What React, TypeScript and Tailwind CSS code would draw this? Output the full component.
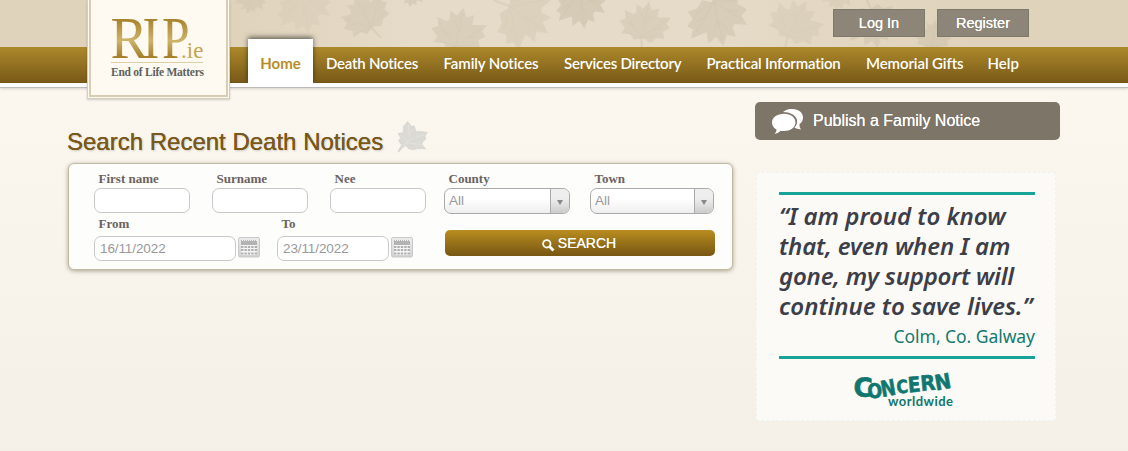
const LEAF =
  "M50 2 L58 18 L72 11 L71 29 L80 27 L97 24 L91 37 L99 44 L88 53 L93 66 L78 68 L68 79 L54 73 L52 74 L58 98 L55 99 L48 75 L36 80 L28 71 L10 73 L15 62 L2 50 L13 43 L7 27 L25 32 L30 28 L28 12 L41 18 Z";
const VEINS =
  "M50 74 L50 12 M50 72 L88 32 M50 72 L12 36 M50 73 L84 60 M50 73 L18 68 M50 45 L60 28 M50 45 L40 28 M68 53 L84 48 M32 55 L18 50";

type LeafProps = { x: number; y: number; size: number; turn: number; tone?: number };

const leaves: LeafProps[] = [
  { x: 251, y: -1, size: 32, turn: 195, tone: 0.75 },
  { x: 304, y: 7, size: 56, turn: 170, tone: 0.4 },
  { x: 366, y: 17, size: 52, turn: -28, tone: 0.7 },
  { x: 412, y: -6, size: 28, turn: 190, tone: 0.8 },
  { x: 458, y: 34, size: 56, turn: 12, tone: 0.7 },
  { x: 522, y: 15, size: 66, turn: 125, tone: 0.55 },
  { x: 581, y: 4, size: 52, turn: 172, tone: 0.9 },
  { x: 644, y: 26, size: 52, turn: 12, tone: 0.7 },
  { x: 717, y: 16, size: 64, turn: 168, tone: 0.8 },
  { x: 794, y: 25, size: 56, turn: 28, tone: 0.5 },
  { x: 838, y: -4, size: 32, turn: 190, tone: 0.5 },
  { x: 873, y: 22, size: 56, turn: 170, tone: 0.8 },
  { x: 933, y: 38, size: 38, turn: 8, tone: 0.9 },
];

function HeaderLeaves() {
  return (
    <svg className="absolute inset-0" width="1128" height="47" viewBox="0 0 1128 47" aria-hidden="true">
      <defs>
        <linearGradient id="paper" x1="0" x2="1">
          <stop offset="0" stopColor="#e5dbc8" stopOpacity="0" />
          <stop offset=".25" stopColor="#e5dbc8" />
          <stop offset=".65" stopColor="#e5dbc8" />
          <stop offset="1" stopColor="#e5dbc8" stopOpacity="0" />
        </linearGradient>
      </defs>
      <rect x="230" width="740" height="47" fill="url(#paper)" />
      {leaves.map((l) => (
        <g
          key={l.x}
          opacity={l.tone ?? 1}
          transform={`translate(${l.x} ${l.y}) rotate(${l.turn}) scale(${l.size / 100}) translate(-50 -50)`}
        >
          <path d={LEAF} fill="#d5cab5" />
          <path d={VEINS} fill="none" stroke="#cfc4ae" strokeWidth="1.3" />
        </g>
      ))}
    </svg>
  );
}

function Logo() {
  return (
    <div className="absolute left-[87px] top-0 z-10 h-[99px] w-[143px] border border-t-0 border-[#d3cdbf] bg-[#fefaf1] px-px pb-px shadow-[0_1px_2px_rgba(0,0,0,0.18)]">
      <div className="h-full border-2 border-t-0 border-[#d8ccb3] bg-[#fefaf1]">
        <svg width="135" height="95" viewBox="91 0 135 95">
          <defs>
            <linearGradient id="gold" x1="0" y1="-40" x2="0" y2="1" gradientUnits="userSpaceOnUse">
              <stop offset="0.05" stopColor="#a9842f" />
              <stop offset="0.55" stopColor="#cdb36a" />
              <stop offset="0.95" stopColor="#a57f2a" />
            </linearGradient>
          </defs>
          <g fill="url(#gold)" fontFamily="'Liberation Serif', serif" fontSize="59">
            <text transform="translate(110.500 58) scale(0.95 1)">R</text>
            <text transform="translate(142.500 58) scale(0.85 1)">I</text>
            <text transform="translate(162 58) scale(0.84 1)">P</text>
          </g>
          <text x="181" y="58" fontSize="23" fill="#c3a556" fontFamily="'Liberation Serif', serif" textLength="22.500">.ie</text>
          <path d="M111 62.500H203" stroke="#dccfa6" />
          <text x="111" y="76" fontSize="11.500" fontWeight="700" fill="#5d625f" fontFamily="'Liberation Serif', serif" textLength="93">
            End of Life Matters
          </text>
        </svg>
      </div>
    </div>
  );
}

const nav = [
  { label: "Death Notices", cls: "w-[93px] tracking-[-0.22px]" },
  { label: "Family Notices", cls: "w-[96px] tracking-[-0.1px]" },
  { label: "Services Directory", cls: "w-[118px] tracking-[-0.22px]" },
  { label: "Practical Information", cls: "w-[135px] tracking-[-0.2px]" },
  { label: "Memorial Gifts", cls: "w-[97px] tracking-[-0.1px]" },
  { label: "Help", cls: "w-[32px]" },
];

function Header() {
  return (
    <header className="relative">
      <div className="relative h-[47px] overflow-hidden bg-[#e0d3bc]">
        <HeaderLeaves />
        <div className="relative flex justify-end gap-3 pr-[99px] pt-[9px] font-['Liberation_Sans',sans-serif] text-[14.5px] text-white">
          <a className="flex h-7 w-[92px] items-center justify-center border border-[#7f796b] bg-[#8d8678] pt-0.5 [text-shadow:0_0_0.5px_white]">Log In</a>
          <a className="flex h-7 w-[92px] items-center justify-center border border-[#7f796b] bg-[#8d8678] pt-0.5 [text-shadow:0_0_0.5px_white]">Register</a>
        </div>
      </div>
      <nav className="flex h-9 bg-linear-to-b from-[#ac892b] to-[#785917] pl-[248px] font-[Lato,sans-serif] text-[15px] font-semibold text-white">
        <a className="relative -mt-2 flex h-11 w-[65px] items-center justify-center bg-white pt-[4px] font-bold text-[#b98d25] shadow-[0_-2px_5px_rgba(0,0,0,0.55)] [clip-path:inset(-8px_-8px_0_-8px)]">
          Home
        </a>
        <div className="flex gap-[24.500px] pl-[13px] leading-8">
          {nav.map((n) => (
            <a key={n.label} className={`whitespace-nowrap ${n.cls}`}>{n.label}</a>
          ))}
        </div>
      </nav>
      <div className="h-[5px] border-b border-[#bdbbb9] bg-white shadow-[0_1px_3px_rgba(0,0,0,0.15)]" />
      <Logo />
    </header>
  );
}

function Label({ children }: { children: string }) {
  return <span className="pl-[4.500px] text-[13px] leading-[15px]">{children}</span>;
}

function TextField({ label }: { label: string }) {
  return (
    <label className="flex w-24 flex-col gap-0.5">
      <Label>{label}</Label>
      <input className="h-[25px] w-full rounded-[7px] border border-[#c9c9c9] bg-white" />
    </label>
  );
}

function SelectField({ label, cls }: { label: string; cls: string }) {
  return (
    <label className={`flex flex-col gap-0.5 ${cls}`}>
      <Label>{label}</Label>
      <span className="flex h-[26px] overflow-hidden rounded-[7px] border border-[#aaa] bg-linear-to-t from-[#eee] to-white to-60%">
        <span className="flex-1 pl-1 font-['Liberation_Sans',sans-serif] text-[13.5px] font-normal leading-[23px] text-[#999]">All</span>
        <span className="flex w-[19px] items-center justify-center border-l border-[#aaa] bg-linear-to-t from-[#ccc] to-[#eee] to-60%">
          <svg className="mt-0.5" width="6" height="5" viewBox="0 0 6 5"><path d="M0 0H6L3 5Z" fill="#888" /></svg>
        </span>
      </span>
    </label>
  );
}

function CalendarButton() {
  return (
    <svg className="-mt-[3px]" width="22" height="21" viewBox="0 0 22 21">
      <defs>
        <linearGradient id="cal" x1="0" y1="0" x2="0" y2="1">
          <stop offset="0" stopColor="#ececec" />
          <stop offset="1" stopColor="#d2d2d2" />
        </linearGradient>
      </defs>
      <rect x=".5" y=".5" width="21" height="19.500" rx="1.500" fill="url(#cal)" stroke="#c9c9c9" />
      <rect x="3" y="3" width="16" height="15" fill="#f5f5f5" />
      <path d="M3 4H19V8H3Z" fill="#b3b3b3" />
      <path d="M3 3.500H19" stroke="#b3b3b3" strokeDasharray="1 1" />
      <path d="M3 10H19M3 13H19M3 16.500H19" stroke="#b0b0b0" strokeWidth="2" strokeDasharray="2.400 1" />
    </svg>
  );
}

function DateField({ label, value, cls }: { label: string; value: string; cls: string }) {
  return (
    <label className="flex flex-col gap-[5px]">
      <Label>{label}</Label>
      <span className="flex items-center gap-0.5">
        <input
          className={`h-[25px] rounded-[7px] border border-[#c9c9c9] bg-white px-[5px] font-['Liberation_Sans',sans-serif] text-[13.5px] font-normal tracking-[-0.1px] text-[#999] ${cls}`}
          defaultValue={value}
        />
        <CalendarButton />
      </span>
    </label>
  );
}

function SearchPanel() {
  return (
    <form className="flex h-[107px] w-[665px] gap-[18px] rounded-md border border-[#c2bba2] bg-[#fdfdfb] pl-[25px] pt-[7px] font-['Liberation_Serif',serif] font-bold text-[#6b6360] shadow-[0_1px_4px_rgba(90,80,50,0.5)]">
      <div className="flex flex-col gap-[3px]">
        <div className="flex gap-[22px]">
          <TextField label="First name" />
          <TextField label="Surname" />
          <TextField label="Nee" />
        </div>
        <div className="flex gap-[17px]">
          <DateField label="From" value="16/11/2022" cls="w-[142px]" />
          <DateField label="To" value="23/11/2022" cls="w-28" />
        </div>
      </div>
      <div className="flex flex-col gap-4">
        <div className="flex gap-5">
          <SelectField label="County" cls="w-[126px]" />
          <SelectField label="Town" cls="w-[124px]" />
        </div>
        <button
          type="button"
          className="ml-px flex h-[26px] w-[270px] items-center justify-center gap-[3px] rounded-[5px] bg-linear-to-b from-[#b98d1f] to-[#775713] pr-0.5 pt-px font-['Liberation_Sans',sans-serif] text-[14px] font-normal text-white [text-shadow:0_0_0.5px_white]"
        >
          <svg className="mt-1" width="13" height="13" viewBox="0 0 13 13" fill="none" stroke="white">
            <circle cx="4.800" cy="4.800" r="3.700" strokeWidth="1.800" />
            <path d="M7.500 7.500L11.500 11.500" strokeWidth="2.800" />
          </svg>
          SEARCH
        </button>
      </div>
    </form>
  );
}

const quote = [
  { text: "“I am proud to know", cls: "tracking-[0px]" },
  { text: "that, even when I am", cls: "tracking-[-0.1px]" },
  { text: "gone, my support will", cls: "tracking-[-0.2px]" },
  { text: "continue to save lives.”", cls: "tracking-[-0.02px]" },
];

const concern = [
  { ch: "C", x: 1, y: 25, size: 26, turn: 3, sx: 1 },
  { ch: "O", x: 16, y: 27.5, size: 20, turn: -5, sx: 0.87 },
  { ch: "N", x: 30, y: 26, size: 22, turn: -10, sx: 0.82 },
  { ch: "C", x: 45, y: 22.5, size: 18, turn: -5, sx: 0.88 },
  { ch: "E", x: 56.5, y: 21.5, size: 21, turn: -5, sx: 0.88 },
  { ch: "R", x: 69, y: 20, size: 21, turn: -5, sx: 0.93 },
  { ch: "N", x: 84, y: 19.5, size: 21, turn: -10, sx: 0.93 },
];

function Banner() {
  return (
    <section className="ml-px mt-8 flex h-[249px] w-[300px] flex-col border border-dashed border-[#eef3ef] bg-[#fcfaf6] pl-[22px] pr-5 pt-[19px]">
      <div className="h-[3px] bg-[#16a398]" />
      <div className="mt-[6px] font-['Noto_Sans',sans-serif] text-[24px] font-semibold italic leading-[30px] text-[#3c3e49]">
        {quote.map((q) => (
          <div key={q.text}>
            <span className={`whitespace-nowrap ${q.cls}`}>{q.text}</span>
          </div>
        ))}
      </div>
      <div className="text-right font-['Noto_Sans',sans-serif] text-[17.500px] leading-[30px] text-[#127a70]">
        <span className="whitespace-nowrap tracking-[-0.05px]">Colm, Co. Galway</span>
      </div>
      <div className="mt-[5px] h-[3px] shrink-0 bg-[#16a398]" />
      <svg className="ml-[73px] mt-3" width="104" height="40" viewBox="0 0 104 40">
        <g fill="#0f776f" stroke="#0f776f" strokeWidth="0.6" strokeLinejoin="round" fontFamily="'DejaVu Sans', sans-serif" fontWeight="700">
          {concern.map((c) => (
            <text
              key={c.x}
              fontSize={c.size}
              transform={`translate(${c.x} ${c.y}) rotate(${c.turn}) scale(${c.sx} 1)`}
            >
              {c.ch}
            </text>
          ))}
        </g>
        <text x="36" y="35" fontFamily="Lato, sans-serif" fontWeight="700" fontSize="13" fill="#0f776f" textLength="65">worldwide</text>
      </svg>
    </section>
  );
}

function TitleLeaf() {
  return (
    <svg className="-mt-[9px]" width="30" height="33" viewBox="0 0 100 110">
      <path
        d="M32 2L45 18L54 16L60 36L70 34L98 38L90 50L93 60L82 70L80 78L92 93L66 92L48 96L34 92L26 82L14 90L2 104L0 101L12 80L2 66L9 56L0 42L14 39L18 34L18 18Z"
        fill="#dbd9d3"
        stroke="#d4d2cc"
        strokeWidth="2"
      />
      <path d="M14 84L40 64L88 44M40 64L34 12M28 73L78 78M34 68L10 48" stroke="#eae8e2" strokeWidth="2" fill="none" />
      <path d="M37 45L50 26M60 56L64 42M50 75L68 86" stroke="#e6e4de" strokeWidth="1.500" fill="none" />
    </svg>
  );
}

export default function App() {
  return (
    <div className="h-[451px] w-[1128px] overflow-hidden bg-linear-to-b from-[#fdf9f1] to-[#f4f0e8]">
      <Header />
      <div className="flex gap-[21px] pl-[67px] pt-[14px]">
        <main className="w-[667px]">
          <div className="flex h-[61px] items-center gap-[15px] pt-[18px]">
            <h1 className="whitespace-nowrap font-['Liberation_Sans',sans-serif] text-[24px] leading-7 text-[#79591a] [text-shadow:1px_1px_2px_rgba(0,0,0,0.2),0_0_0.6px_#79591a]">
              Search Recent Death Notices
            </h1>
            <TitleLeaf />
          </div>
          <div className="pl-px">
            <SearchPanel />
          </div>
        </main>
        <aside className="w-[305px]">
          <a className="flex h-[38px] items-center gap-[10px] rounded-[5px] bg-[#7d7567] pl-[17px] font-['Liberation_Sans',sans-serif] text-base text-white [text-shadow:0_0_0.5px_white]">
            <svg width="31" height="25" viewBox="0 0 31 25" fill="white">
              <path d="M11 3C14 .5 17 0 20 0C27 0 31 4 31 8.500C31 11.500 30 13.500 27.500 15C27.300 17.500 28 19 29 20.500C26 20 24 19.500 22.500 18.500C24.500 16.500 25.500 14 25 11C24 6 18 3 11 3Z" />
              <path d="M12 4.800C19 4.800 23.500 8.500 23.500 13.500C23.500 18.500 18 22 12 22C10.500 22 9.500 22 8.500 21.800C7 23.500 5 24.500 2.500 24.800C4 23.500 4.500 22 4.500 20.500C1.500 19 0 16.500 0 13.500C0 8.500 5 4.800 12 4.800Z" />
            </svg>
            <span>Publish a Family Notice</span>
          </a>
          <Banner />
        </aside>
      </div>
    </div>
  );
}
